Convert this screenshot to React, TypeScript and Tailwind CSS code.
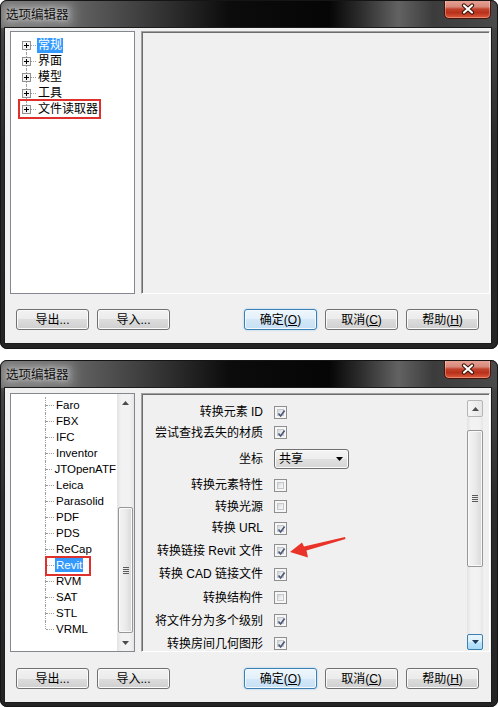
import React from "react";

const cjk = "font-['Liberation_Sans','Noto_Sans_CJK_SC',sans-serif]";
const latin = "font-['Liberation_Sans',Arial,sans-serif]";

function CloseButton() {
  return (
    <div className="mr-[7px] w-[47px] h-[19px] rounded-b-[5px] border border-t-0 border-[#4a140b] bg-[linear-gradient(180deg,#e7a596_0%,#d7887a_38%,#c3432c_50%,#b7311b_70%,#e05a3c_100%)] shadow-[inset_0_0_0_1px_rgba(255,255,255,0.3)] flex items-center justify-center">
      <svg width="14" height="12" viewBox="0 0 14 12">
        <path d="M3 2.5L11 9.5M11 2.5L3 9.5" stroke="#3a1208" strokeWidth="4.2" strokeLinecap="round" />
        <path d="M3 2.5L11 9.5M11 2.5L3 9.5" stroke="#ffffff" strokeWidth="2.2" strokeLinecap="round" />
      </svg>
    </div>
  );
}

function TitleBar() {
  return (
    <div className="h-[28px] shrink-0 flex items-start justify-between bg-[linear-gradient(90deg,#707070_0%,#656565_14%,#3a3a3a_30%,#0c0c0c_46%,#050505_66%,#2a2a2a_72%,#626262_80%,#3c3c3c_87%,#4a4a4a_100%)]">
      <div className="ml-[2px] mt-[4px] px-[4px] py-[3px] rounded-[6px] bg-[rgba(255,255,255,0.12)] shadow-[0_0_8px_4px_rgba(255,255,255,0.12)]">
        <div
          className={`text-[12.5px] leading-[16px] text-[#111] ${cjk} [text-shadow:0_0_5px_rgba(255,255,255,0.9),0_0_10px_rgba(255,255,255,0.6)]`}
        >
          选项编辑器
        </div>
      </div>
      <CloseButton />
    </div>
  );
}

function Win7Button({ children, primary }: { children: React.ReactNode; primary?: boolean }) {
  return (
    <div
      className={`w-[73px] h-[21px] rounded-[3px] border flex items-center justify-center text-[12px] leading-[14px] text-black ${cjk} ${
        primary
          ? "border-[#3c7fb1] bg-[linear-gradient(180deg,#edf6fc_0%,#e3f0fa_50%,#d3e8f8_50%,#c6e0f4_100%)] shadow-[inset_0_0_0_1px_#f4faff,0_0_2px_#8cc7ee]"
          : "border-[#707070] bg-[linear-gradient(180deg,#f2f2f2_0%,#ebebeb_50%,#dddddd_50%,#cfcfcf_100%)] shadow-[inset_0_0_0_1px_#fbfbfb]"
      }`}
    >
      {children}
    </div>
  );
}

function ButtonRow() {
  return (
    <div className="h-[21px] flex items-center justify-between pl-[11px] pr-[12px]">
      <div className="flex gap-[8px]">
        <Win7Button>导出...</Win7Button>
        <Win7Button>导入...</Win7Button>
      </div>
      <div className="flex gap-[8px]">
        <Win7Button primary>
          确定(<span className="underline underline-offset-1">O</span>)
        </Win7Button>
        <Win7Button>
          取消(<span className="underline underline-offset-1">C</span>)
        </Win7Button>
        <Win7Button>
          帮助(<span className="underline underline-offset-1">H</span>)
        </Win7Button>
      </div>
    </div>
  );
}

function PlusBox() {
  return (
    <svg width="9" height="9" viewBox="0 0 9 9" className="shrink-0 block">
      <rect x="0.5" y="0.5" width="8" height="8" fill="#f3f3f3" stroke="#919191" />
      <path d="M2 4.5H7M4.5 2V7" stroke="#000" />
    </svg>
  );
}

const tree1 = ["常规", "界面", "模型", "工具", "文件读取器"];

function Tree1() {
  return (
    <div className="w-[125px] h-full border border-[#828790] bg-white pt-[5px] pl-[11px]">
      {tree1.map((t, i) => (
        <div key={t} className="h-[16px] flex items-center">
          <div className="w-[9px] h-full flex flex-col items-center">
            <div className={`flex-1 w-px ${i === 0 ? "" : "border-l border-dotted border-[#a0a0a0]"}`} />
            <PlusBox />
            <div className={`flex-1 w-px ${i === tree1.length - 1 ? "" : "border-l border-dotted border-[#a0a0a0]"}`} />
          </div>
          <div className="w-[5px] border-t border-dotted border-[#a0a0a0]" />
          <span
            className={`ml-[1px] px-[1px] h-[15px] leading-[15px] text-[12px] ${cjk} ${
              i === 0 ? "bg-[#3399ff] text-white" : "text-black"
            }`}
          >
            {t}
          </span>
        </div>
      ))}
    </div>
  );
}

function ArrowGlyph({ up, color = "#4d4d4d" }: { up?: boolean; color?: string }) {
  return (
    <svg width="7" height="4" viewBox="0 0 7 4" className="block">
      <path d={up ? "M0 4H7L3.5 0Z" : "M0 0H7L3.5 4Z"} fill={color} />
    </svg>
  );
}

function Grip() {
  return (
    <div className="flex flex-col gap-[1px]">
      <div className="w-[6px] h-px bg-[#5a5a5a]" />
      <div className="w-[6px] h-px bg-[#5a5a5a]" />
      <div className="w-[6px] h-px bg-[#5a5a5a]" />
      <div className="w-[6px] h-px bg-[#5a5a5a]" />
    </div>
  );
}

function TreeScroll() {
  return (
    <div className="w-[17px] h-full flex flex-col bg-[linear-gradient(90deg,#e3e3e3_0%,#f2f2f2_25%,#f2f2f2_75%,#e6e6e6_100%)]">
      <div className="h-[17px] flex items-center justify-center">
        <ArrowGlyph up />
      </div>
      <div className="flex-1 pt-[96px] px-[1px]">
        <div className="h-[126px] rounded-[2px] border border-[#979797] bg-[linear-gradient(90deg,#f4f4f4_0%,#ebebeb_50%,#d8d8d8_100%)] shadow-[inset_0_0_0_1px_#fafafa] flex items-center justify-center">
          <Grip />
        </div>
      </div>
      <div className="h-[17px] flex items-center justify-center">
        <ArrowGlyph />
      </div>
    </div>
  );
}

const tree2 = [
  "Faro",
  "FBX",
  "IFC",
  "Inventor",
  "JTOpenATF",
  "Leica",
  "Parasolid",
  "PDF",
  "PDS",
  "ReCap",
  "Revit",
  "RVM",
  "SAT",
  "STL",
  "VRML",
];

function Tree2() {
  return (
    <div className="w-[125px] h-full border border-[#828790] bg-white flex">
      <div className="flex-1 overflow-hidden pt-[3px] pl-[34px]">
        {tree2.map((t, i) => (
          <div key={t} className="h-[16px] flex items-center">
            <div className="h-full w-px flex flex-col">
              <div className="h-[8px] border-l border-dotted border-[#a0a0a0]" />
              <div className={`flex-1 ${i === tree2.length - 1 ? "" : "border-l border-dotted border-[#a0a0a0]"}`} />
            </div>
            <div className="w-[8px] border-t border-dotted border-[#a0a0a0]" />
            <span
              className={`ml-[1px] px-[1px] h-[14px] leading-[14px] text-[11.5px] ${latin} ${
                t === "Revit" ? "bg-[#3399ff] text-white" : "text-black"
              }`}
            >
              {t}
            </span>
          </div>
        ))}
      </div>
      <TreeScroll />
    </div>
  );
}

function Checkbox({ checked }: { checked: boolean }) {
  return (
    <div className="w-[13px] h-[13px] border border-[#8e8f8f] bg-[#f6f6f6] p-[2px] flex">
      <div className="flex-1 border border-[#c4c8cd] bg-[linear-gradient(135deg,#d3d6da_0%,#eeeff0_60%,#f7f7f7_100%)] relative">
        {checked && (
          <svg width="11" height="11" viewBox="0 0 11 11" className="absolute -left-[2px] -top-[2px]">
            <path d="M2.5 5.5L4.6 8L8.6 2.6" stroke="#4b5a7a" strokeWidth="1.7" fill="none" />
          </svg>
        )}
      </div>
    </div>
  );
}

function Select() {
  return (
    <div
      className={`w-[75px] h-[20px] rounded-[3px] border border-[#707070] bg-[linear-gradient(180deg,#f4f4f4_0%,#ededed_50%,#e0e0e0_50%,#d6d6d6_100%)] shadow-[inset_0_0_0_1px_#fbfbfb] flex items-center justify-between pl-[4px] pr-[5px] text-[12px] text-black ${cjk}`}
    >
      <span>共享</span>
      <ArrowGlyph color="#000" />
    </div>
  );
}

type Row = { label: string; kind: "check" | "select"; checked?: boolean; h: string };

const rows: Row[] = [
  { label: "转换元素 ID", kind: "check", checked: true, h: "h-[20px]" },
  { label: "尝试查找丢失的材质", kind: "check", checked: true, h: "h-[21px]" },
  { label: "坐标", kind: "select", h: "h-[31px]" },
  { label: "转换元素特性", kind: "check", checked: false, h: "h-[22px]" },
  { label: "转换光源", kind: "check", checked: false, h: "h-[21px]" },
  { label: "转换 URL", kind: "check", checked: true, h: "h-[22px]" },
  { label: "转换链接 Revit 文件", kind: "check", checked: true, h: "h-[23px]" },
  { label: "转换 CAD 链接文件", kind: "check", checked: true, h: "h-[24px]" },
  { label: "转换结构件", kind: "check", checked: false, h: "h-[23px]" },
  { label: "将文件分为多个级别", kind: "check", checked: true, h: "h-[23px]" },
  { label: "转换房间几何图形", kind: "check", checked: true, h: "h-[23px]" },
];

function PanelScroll() {
  return (
    <div className="w-[16px] h-full flex flex-col bg-[linear-gradient(90deg,#e3e3e3_0%,#f2f2f2_25%,#f2f2f2_75%,#e6e6e6_100%)]">
      <div className="h-[17px] rounded-[2px] border border-[#b5b5b5] bg-[linear-gradient(90deg,#f6f6f6,#e6e6e6)] flex items-center justify-center">
        <ArrowGlyph up />
      </div>
      <div className="flex-1 pt-[13px]">
        <div className="h-[137px] rounded-[2px] border border-[#979797] bg-[linear-gradient(90deg,#f4f4f4_0%,#ebebeb_50%,#d8d8d8_100%)] shadow-[inset_0_0_0_1px_#fafafa] flex items-center justify-center">
          <Grip />
        </div>
      </div>
      <div className="h-[16px] rounded-[2px] border border-[#3c7fb1] bg-[linear-gradient(180deg,#eaf6fd_0%,#d9f0fc_50%,#bee6fd_50%,#a7d9f5_100%)] flex items-center justify-center">
        <ArrowGlyph color="#1d3a55" />
      </div>
    </div>
  );
}

function RightPanel({ children }: { children?: React.ReactNode }) {
  return (
    <div className="flex-1 h-full border border-t-[#a0a0a0] border-l-[#a0a0a0] border-r-white border-b-white bg-[#f0f0f0] shadow-[inset_1px_1px_0_#6d6d6d]">
      {children}
    </div>
  );
}

function OptionsPanel() {
  return (
    <RightPanel>
      <div className="h-full flex pt-[6px] pr-[6px] pb-[1px]">
        <div className="flex-1 overflow-hidden pt-[2px]">
          {rows.map((r) => (
            <div key={r.label} className={`${r.h} flex items-center gap-[11px]`}>
              <div className={`w-[121px] text-right text-[12px] leading-[16px] text-black whitespace-nowrap ${cjk}`}>
                {r.label}
              </div>
              {r.kind === "check" ? <Checkbox checked={!!r.checked} /> : <Select />}
            </div>
          ))}
        </div>
        <PanelScroll />
      </div>
    </RightPanel>
  );
}

function Window({
  children,
  h,
  pt,
  panelH,
  mt,
  pb,
}: {
  children: React.ReactNode;
  h: string;
  pt: string;
  panelH: string;
  mt: string;
  pb: string;
}) {
  return (
    <div className={`${h} shrink-0 flex flex-col rounded-[7px] overflow-hidden bg-[linear-gradient(180deg,#4a4a4a_0%,#2c2c2c_40%,#242424_100%)] outline-1 -outline-offset-1 outline-[#151515]`}>
      <TitleBar />
      <div className={`ml-[5px] mr-[7px] flex flex-col bg-[#f0f0f0] shadow-[0_0_0_1px_#1c1c1c] ${pt} ${pb}`}>
        <div className={`${panelH} flex gap-[6px] pl-[5px] pr-[1px]`}>{children}</div>
        <div className={mt}>
          <ButtonRow />
        </div>
      </div>
    </div>
  );
}

export default function App() {
  return (
    <div className="relative w-[498px] h-[707px] bg-white overflow-hidden flex flex-col gap-[11px]">
      <Window h="h-[349px]" pt="pt-[3px]" panelH="h-[263px]" mt="mt-[15px]" pb="pb-[13px]">
        <Tree1 />
        <RightPanel />
      </Window>
      <Window h="h-[347px]" pt="pt-[5px]" panelH="h-[259px]" mt="mt-[16px]" pb="pb-[13px]">
        <Tree2 />
        <OptionsPanel />
      </Window>

      {/* annotations */}
      <div className="absolute left-[18px] top-[99px] w-[83px] h-[20px] border-2 border-[#e0302b]" />
      <div className="absolute left-[45px] top-[556px] w-[46px] h-[20px] border-2 border-[#e0302b]" />
      <svg className="absolute left-[285px] top-[530px]" width="66" height="32" viewBox="0 0 66 32">
        <polygon points="5,22 17,12.5 19,16.5 60,7 60.5,9 21.5,20.5 23,27.5" fill="#ea3328" />
      </svg>
    </div>
  );
}
